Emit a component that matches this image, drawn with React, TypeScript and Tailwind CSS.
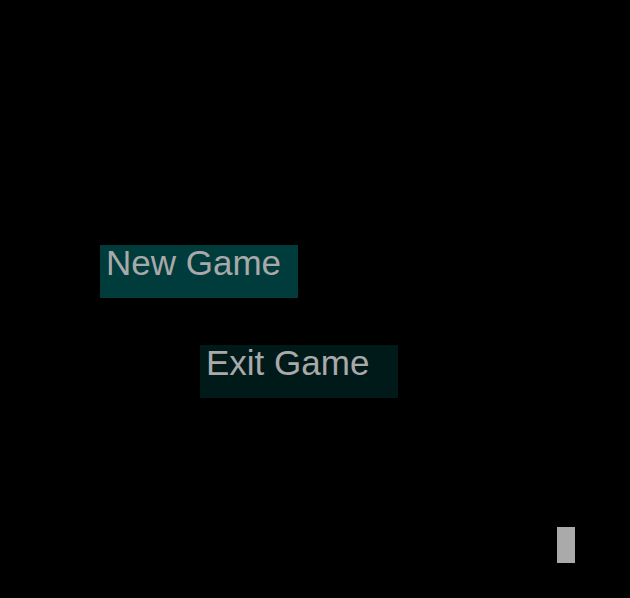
/**
 * Title menu: two stacked buttons on a black screen, with a small indicator block.
 */
function MenuButton({ label, className = '' }: { label: string; className?: string }) {
  return (
    <button
      type="button"
      className={`flex items-start w-[198px] h-[53px] pl-[6px] text-left text-[35px] leading-none text-[#a9a9a9] ${className}`}
      style={{ fontFamily: '"Liberation Sans", Arial, sans-serif' }}
    >
      {label}
    </button>
  );
}

export default function App() {
  return (
    <div className="relative w-full h-[598px] bg-black overflow-hidden">
      <div className="flex flex-col items-start pt-[245px] pl-[100px]">
        <MenuButton label="New Game" className="bg-[#003c3c]" />
        <MenuButton label="Exit Game" className="bg-[#001a1a] mt-[47px] ml-[100px]" />
      </div>

      {/* indicator block */}
      <div className="absolute left-[557px] top-[527px] w-[18px] h-[36px] bg-[#aaaaaa]" />
    </div>
  );
}
